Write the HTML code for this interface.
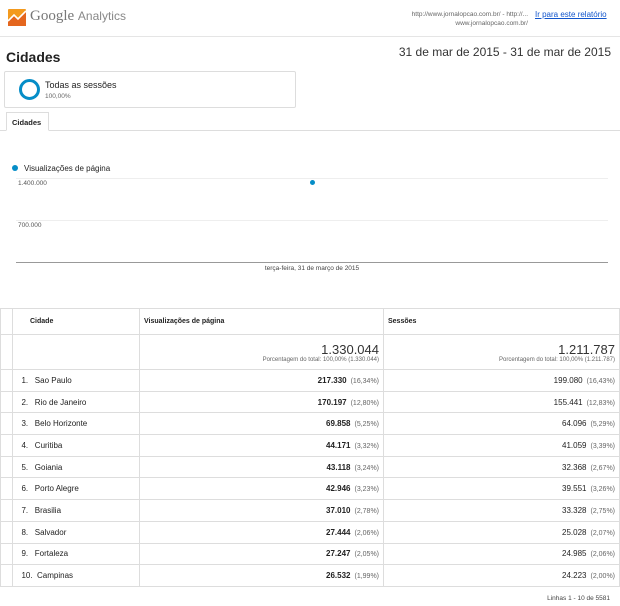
<!DOCTYPE html>
<html><head><meta charset="utf-8"><style>
*{margin:0;padding:0;box-sizing:border-box}
body{width:620px;height:606px;background:#fff;font-family:"Liberation Sans",Arial,sans-serif;color:#222;position:relative;overflow:hidden}
.a{position:absolute}
table{border-collapse:collapse;position:absolute;left:0;top:308px;width:619px;table-layout:fixed;font-size:8px}
td{border:1px solid #ddd;padding:0 4px;white-space:nowrap}
th{border:1px solid #ddd;font-size:7px;text-align:left;padding:0 4px;height:26px;background:#fff}
tr.r td{height:21.7px}
.n{text-align:right}
.p{color:#666;font-size:7px;margin-left:4px}
b{font-weight:bold}
</style></head><body>
<svg class="a" style="left:8px;top:9px" width="18" height="17" viewBox="0 0 18 17"><rect width="18" height="17" rx="1" fill="#f39a1e"/><path d="M0 17 L0 12 L6 6 L10 10 L18 2 L18 17 Z" fill="#e4661e"/><path d="M0 12 L6 6 L10 10 L18 2" stroke="#fff" stroke-width="1.6" fill="none"/></svg>
<div class="a" style="left:30px;top:8px;font-size:15px;color:#777;font-family:'Liberation Serif',serif">Google <span style="font-family:'Liberation Sans',sans-serif;font-size:12px;color:#888">Analytics</span></div>
<div class="a" style="left:380px;top:10px;width:148px;text-align:right;font-size:6.5px;color:#666;line-height:9px">http://www.jornalopcao.com.br/ - http://...<br>www.jornalopcao.com.br/</div>
<div class="a" style="left:535px;top:10px;font-size:8px;color:#1155cc;text-decoration:underline">Ir para este relatório</div>
<div class="a" style="left:0;top:36px;width:620px;height:1px;background:#e5e5e5"></div>
<div class="a" style="left:6px;top:49px;font-size:14px;font-weight:bold">Cidades</div>
<div class="a" style="right:9px;top:45px;font-size:12px;color:#333;white-space:nowrap">31 de mar de 2015 - 31 de mar de 2015</div>
<div class="a" style="left:4px;top:71px;width:292px;height:37px;border:1px solid #ddd;border-radius:2px"></div>
<div class="a" style="left:19px;top:79px;width:21px;height:21px;border:3.5px solid #058dc7;border-radius:50%"></div>
<div class="a" style="left:45px;top:80px;font-size:9px">Todas as sessões</div>
<div class="a" style="left:45px;top:93px;font-size:6.5px;color:#666">100,00%</div>
<div class="a" style="left:0;top:130px;width:620px;height:1px;background:#ddd"></div>
<div class="a" style="left:6px;top:112px;width:43px;height:19px;border:1px solid #ddd;border-bottom:1px solid #fff;background:#fff;font-size:7.5px;font-weight:bold;padding:5px 0 0 5px">Cidades</div>
<div class="a" style="left:12px;top:165px;width:6px;height:6px;border-radius:50%;background:#058dc7"></div>
<div class="a" style="left:24px;top:164px;font-size:8px">Visualizações de página</div>
<div class="a" style="left:16px;top:178px;width:592px;height:1px;background:#eee"></div>
<div class="a" style="left:16px;top:220px;width:592px;height:1px;background:#eee"></div>
<div class="a" style="left:16px;top:262px;width:592px;height:1px;background:#999"></div>
<div class="a" style="left:18px;top:180px;font-size:6.5px;color:#555">1.400.000</div>
<div class="a" style="left:18px;top:222px;font-size:6.5px;color:#555">700.000</div>
<div class="a" style="left:310px;top:180px;width:5px;height:5px;border-radius:50%;background:#058dc7"></div>
<div class="a" style="left:0;top:265px;width:624px;text-align:center;font-size:6.5px;color:#444">terça-feira, 31 de março de 2015</div>
<table>
<colgroup><col style="width:12px"><col style="width:127px"><col style="width:244px"><col style="width:236px"></colgroup>
<tr><th></th><th style="padding-left:17px">Cidade</th><th>Visualizações de página</th><th>Sessões</th></tr>
<tr><td style="height:35px"></td><td></td><td class="n"><div style="font-size:13px;color:#333">1.330.044</div><div style="font-size:6px;color:#666">Porcentagem do total: 100,00% (1.330.044)</div></td><td class="n"><div style="font-size:13px;color:#333">1.211.787</div><div style="font-size:6px;color:#666">Porcentagem do total: 100,00% (1.211.787)</div></td></tr>
<tr class="r"><td></td><td>&nbsp;&nbsp;1.&nbsp;&nbsp;&nbsp;Sao Paulo</td><td class="n"><b>217.330</b><span class="p">(16,34%)</span></td><td class="n">199.080<span class="p">(16,43%)</span></td></tr>
<tr class="r"><td></td><td>&nbsp;&nbsp;2.&nbsp;&nbsp;&nbsp;Rio de Janeiro</td><td class="n"><b>170.197</b><span class="p">(12,80%)</span></td><td class="n">155.441<span class="p">(12,83%)</span></td></tr>
<tr class="r"><td></td><td>&nbsp;&nbsp;3.&nbsp;&nbsp;&nbsp;Belo Horizonte</td><td class="n"><b>69.858</b><span class="p">(5,25%)</span></td><td class="n">64.096<span class="p">(5,29%)</span></td></tr>
<tr class="r"><td></td><td>&nbsp;&nbsp;4.&nbsp;&nbsp;&nbsp;Curitiba</td><td class="n"><b>44.171</b><span class="p">(3,32%)</span></td><td class="n">41.059<span class="p">(3,39%)</span></td></tr>
<tr class="r"><td></td><td>&nbsp;&nbsp;5.&nbsp;&nbsp;&nbsp;Goiania</td><td class="n"><b>43.118</b><span class="p">(3,24%)</span></td><td class="n">32.368<span class="p">(2,67%)</span></td></tr>
<tr class="r"><td></td><td>&nbsp;&nbsp;6.&nbsp;&nbsp;&nbsp;Porto Alegre</td><td class="n"><b>42.946</b><span class="p">(3,23%)</span></td><td class="n">39.551<span class="p">(3,26%)</span></td></tr>
<tr class="r"><td></td><td>&nbsp;&nbsp;7.&nbsp;&nbsp;&nbsp;Brasilia</td><td class="n"><b>37.010</b><span class="p">(2,78%)</span></td><td class="n">33.328<span class="p">(2,75%)</span></td></tr>
<tr class="r"><td></td><td>&nbsp;&nbsp;8.&nbsp;&nbsp;&nbsp;Salvador</td><td class="n"><b>27.444</b><span class="p">(2,06%)</span></td><td class="n">25.028<span class="p">(2,07%)</span></td></tr>
<tr class="r"><td></td><td>&nbsp;&nbsp;9.&nbsp;&nbsp;&nbsp;Fortaleza</td><td class="n"><b>27.247</b><span class="p">(2,05%)</span></td><td class="n">24.985<span class="p">(2,06%)</span></td></tr>
<tr class="r"><td></td><td>&nbsp;&nbsp;10.&nbsp;&nbsp;Campinas</td><td class="n"><b>26.532</b><span class="p">(1,99%)</span></td><td class="n">24.223<span class="p">(2,00%)</span></td></tr>
</table>
<div class="a" style="left:500px;top:595px;width:110px;text-align:right;font-size:6.5px;color:#444">Linhas 1 - 10 de 5581</div>
</body></html>
